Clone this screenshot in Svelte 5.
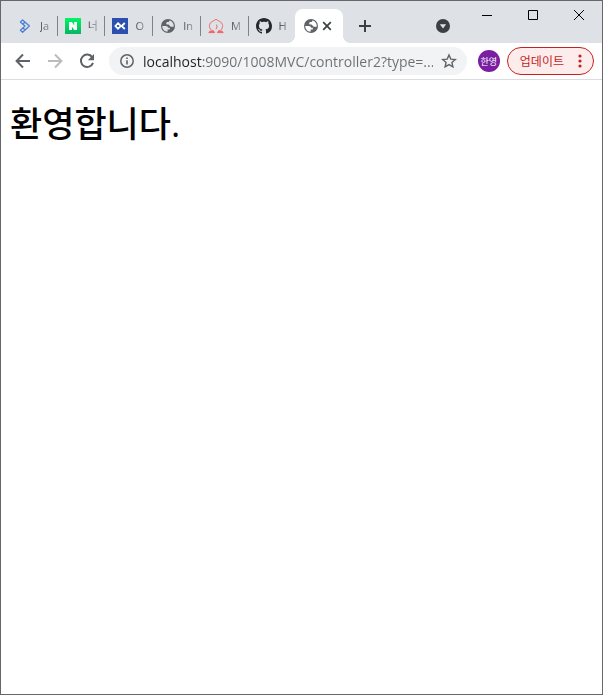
<script>
  const tabs = [
    { icon: 'chevrons', label: 'Ja' },
    { icon: 'naver', label: '너' },
    { icon: 'okky', label: 'O' },
    { icon: 'globe', label: 'In' },
    { icon: 'peach', label: 'M' },
    { icon: 'github', label: 'H' }
  ];
  let url = $state('localhost:9090/1008MVC/controller2?type=...');
</script>

{#snippet globe(land)}
  <svg class="fav" viewBox="0 0 16 16" aria-hidden="true">
    <circle cx="8" cy="8" r="7" fill="#5f6368" />
    <path d="M2.2 8 H5.8 C7.2 8 8 8.8 8 9.8 H9.8 V11.4 H7.6 V13.8 C4.4 13.6 2.2 11 2.2 8Z" fill={land} />
    <path d="M9.4 2.4 C9.4 3.8 8.8 4 7.6 4 C6.6 4 6.2 4.6 6.2 5.6 C6.2 6.6 7 6.6 8.2 6.6 C9.4 6.6 9.6 8.8 11 8.8 H13.7 C14.2 5.6 12.2 3 9.4 2.4Z" fill={land} />
  </svg>
{/snippet}

{#snippet favicon(name)}
  {#if name === 'globe'}
    {@render globe('#dee1e6')}
  {:else if name === 'chevrons'}
    <svg class="fav" viewBox="0 0 16 16" fill="none" stroke="#4a7fd6" stroke-width="1.3" stroke-linejoin="round" aria-hidden="true">
      <path d="M5.6 1.9 L12.4 8 L5.6 14.2 L3.4 12.2 L8 8 L3.4 4Z" />
      <path d="M7.8 4.2 L5.8 6.2 M7.8 11.8 L5.8 9.8" />
    </svg>
  {:else if name === 'naver'}
    <svg class="fav" viewBox="0 0 16 16" aria-hidden="true">
      <defs>
        <linearGradient id="green" x2="0" y2="1">
          <stop stop-color="#00f562" />
          <stop offset="1" stop-color="#08b562" />
        </linearGradient>
      </defs>
      <rect width="16" height="16" fill="url(#green)" />
      <path d="M4 4h3l2.2 3.4V4H12v8H9.2L6.9 8.6V12H4Z" fill="#fff" />
    </svg>
  {:else if name === 'okky'}
    <svg class="fav" viewBox="0 0 16 16" aria-hidden="true">
      <rect width="16" height="16" fill="#2b50ae" />
      <path d="M6 5.2 L8.8 8 L6 10.8 L3.4 8Z M12.8 5 L9.6 8 L12.8 11" fill="none" stroke="#fff" stroke-width="1.8" />
    </svg>
  {:else if name === 'peach'}
    <svg class="fav" viewBox="0 0 16 16" fill="none" stroke="#ee6669" stroke-width="1" aria-hidden="true">
      <path d="M3.4 12.2 C.4 9.4 .8 5.2 4.4 3.4 Q6.6 2.4 8 1.2 Q9.4 2.4 11.6 3.4 C15.2 5.2 15.6 9.4 12.6 12.2 M8.6 6.6 Q9.8 9 8 11.2" />
      <path d="M.8 14.6 Q1.6 12.6 3.4 13 Q5.4 11.4 6.6 14.6Z M9.4 14.6 Q10.6 11.4 12.6 13 Q14.4 12.6 15.2 14.6Z" fill="#ee6669" />
    </svg>
  {:else}
    <svg class="fav" viewBox="0 0 16 16" aria-hidden="true">
      <path fill="#24292e" d="M8 0C3.58 0 0 3.58 0 8c0 3.54 2.29 6.53 5.47 7.59.4.07.55-.17.55-.38 0-.19-.01-.82-.01-1.49-2.01.37-2.53-.49-2.69-.94-.09-.23-.48-.94-.82-1.13-.28-.15-.68-.52-.01-.53.63-.01 1.08.58 1.23.82.72 1.21 1.87.87 2.33.66.07-.52.28-.87.51-1.07-1.78-.2-3.64-.89-3.64-3.95 0-.87.31-1.59.82-2.15-.08-.2-.36-1.02.08-2.12 0 0 .67-.21 2.2.82.64-.18 1.32-.27 2-.27s1.36.09 2 .27c1.53-1.04 2.2-.82 2.2-.82.44 1.1.16 1.92.08 2.12.51.56.82 1.27.82 2.15 0 3.07-1.87 3.75-3.65 3.95.29.25.54.73.54 1.48 0 1.07-.01 1.93-.01 2.2 0 .21.15.46.55.38A8.01 8.01 0 0 0 16 8c0-4.42-3.58-8-8-8Z" />
    </svg>
  {/if}
{/snippet}

<div class="window">
  <header class="strip">
    <div class="tabs" role="tablist">
      {#each tabs as tab}
        <button class="tab" role="tab" aria-selected="false">
          {@render favicon(tab.icon)}
          <span class="label">{tab.label}</span>
        </button>
      {/each}
      <div class="tab active">
        {@render globe('#fff')}
        <button class="close" aria-label="Close tab">
          <svg width="10" height="10" viewBox="0 0 10 10"><path d="M1.2 1.2l7.6 7.6M8.8 1.2L1.2 8.8" stroke="#3c4043" stroke-width="1.7" /></svg>
        </button>
      </div>
    </div>
    <button class="new" aria-label="New tab">
      <svg width="12" height="12" viewBox="0 0 12 12"><path d="M6 0v12M0 6h12" stroke="#3c4043" stroke-width="2" /></svg>
    </button>
    <button class="search" aria-label="Search tabs">
      <svg width="14" height="14" viewBox="0 0 14 14"><circle cx="7" cy="7" r="7" fill="#3c4043" /><path d="M3.8 5.2h6.4L7 9.4Z" fill="#dee1e6" /></svg>
    </button>
    <div class="controls">
      <button aria-label="Minimize">
        <svg width="10" height="10" viewBox="0 0 10 10"><path d="M0 5.5h10" stroke="#000" /></svg>
      </button>
      <button aria-label="Maximize">
        <svg width="10" height="10" viewBox="0 0 10 10"><path d="M.5.5h9v9h-9Z" fill="none" stroke="#000" /></svg>
      </button>
      <button aria-label="Close">
        <svg width="10" height="10" viewBox="0 0 10 10"><path d="M0 0l10 10M10 0L0 10" stroke="#000" /></svg>
      </button>
    </div>
  </header>

  <nav class="toolbar">
    <button class="nav" aria-label="Back">
      <svg width="16" height="16" viewBox="0 0 16 16" fill="none" stroke="#5f6368" stroke-width="2"><path d="M15 8H2M8 1.5L1.6 8 8 14.5" /></svg>
    </button>
    <button class="nav" aria-label="Forward" disabled>
      <svg width="16" height="16" viewBox="0 0 16 16" fill="none" stroke="#babcbe" stroke-width="2"><path d="M1 8h13M8 1.5L14.4 8 8 14.5" /></svg>
    </button>
    <button class="nav" aria-label="Reload">
      <svg width="16" height="16" viewBox="0 0 16 16"><path d="M13.2 4.2A6.2 6.2 0 1 0 14 9.8" fill="none" stroke="#5f6368" stroke-width="2" /><path d="M15 1v6.2H8.8Z" fill="#5f6368" /></svg>
    </button>
    <div class="omnibox">
      <button class="mini" aria-label="Site information">
        <svg width="16" height="16" viewBox="0 0 16 16"><circle cx="8" cy="8" r="6.2" fill="none" stroke="#5f6368" stroke-width="1.5" /><path d="M8 7.2v4.2M8 4.4v1.6" stroke="#5f6368" stroke-width="1.6" /></svg>
      </button>
      <input class="url" type="text" aria-label="Address" bind:value={url} />
      <button class="mini" aria-label="Bookmark this page">
        <svg width="16" height="16" viewBox="0 0 16 16"><path d="M8 2l1.8 4.1 4.5.4-3.4 3 1 4.4L8 11.6l-3.9 2.3 1-4.4-3.4-3 4.5-.4Z" fill="none" stroke="#5f6368" stroke-width="1.4" /></svg>
      </button>
    </div>
    <button class="avatar">한영</button>
    <button class="update">
      <span>업데이트</span>
      <svg width="4" height="14" viewBox="0 0 4 14" fill="#c5221f" aria-hidden="true"><circle cx="2" cy="2" r="1.6" /><circle cx="2" cy="7" r="1.6" /><circle cx="2" cy="12" r="1.6" /></svg>
    </button>
  </nav>

  <main>
    <h1>환영합니다.</h1>
  </main>
</div>

<style>
  :global(body) {
    margin: 0;
  }
  .window {
    box-sizing: border-box;
    min-height: 100vh;
    border: 1px solid #666769;
    background: #fff;
    font-family: 'Open Sans', 'Noto Sans CJK KR', sans-serif;
  }
  button {
    display: flex;
    align-items: center;
    justify-content: center;
    padding: 0;
    border: 0;
    background: none;
    font: inherit;
  }
  svg {
    display: block;
    flex: none;
  }
  .strip {
    display: flex;
    align-items: flex-end;
    height: 42px;
    padding-left: 8px;
    background: #dee1e6;
  }
  .tabs {
    display: flex;
    flex: 0 1 334px;
    min-width: 0;
  }
  .tab {
    position: relative;
    display: flex;
    flex: 1 1 0;
    align-items: center;
    justify-content: flex-start;
    gap: 7px;
    min-width: 0;
    height: 34px;
    padding: 0 4px 0 8px;
    box-sizing: border-box;
  }
  .tab:not(:first-child):not(.active)::before {
    content: '';
    position: absolute;
    left: 0;
    top: 7px;
    width: 1px;
    height: 20px;
    background: #808387;
  }
  .fav {
    width: 16px;
    height: 16px;
  }
  .label {
    flex: 1 1 0;
    overflow: hidden;
    color: #45494d;
    font-size: 11px;
    line-height: 16px;
    text-align: left;
    white-space: nowrap;
    -webkit-mask-image: linear-gradient(to right, #000, #0004);
    mask-image: linear-gradient(to right, #000, #0004);
  }
  .active {
    gap: 3px;
    border-radius: 8px 8px 0 0;
    background: #fff;
  }
  .active::before,
  .active::after {
    content: '';
    position: absolute;
    bottom: 0;
    width: 8px;
    height: 8px;
  }
  .active::before {
    right: 100%;
    background: radial-gradient(circle at 0 0, transparent 8px, #fff 8px);
  }
  .active::after {
    left: 100%;
    background: radial-gradient(circle at 100% 0, transparent 8px, #fff 8px);
  }
  .close {
    flex: none;
  }
  .new {
    width: 28px;
    height: 34px;
    margin-left: 8px;
  }
  .search {
    width: 28px;
    height: 34px;
    margin-left: auto;
    margin-right: 7px;
  }
  .controls {
    display: flex;
    align-self: flex-start;
  }
  .controls button {
    width: 46px;
    height: 28px;
  }
  .toolbar {
    display: flex;
    align-items: center;
    height: 36px;
    padding: 0 8px 0 6px;
    border-bottom: 1px solid #dadce0;
  }
  .nav {
    width: 32px;
    height: 28px;
  }
  .omnibox {
    display: flex;
    flex: 1;
    align-items: center;
    gap: 8px;
    min-width: 0;
    height: 28px;
    margin-left: 6px;
    padding: 0 10px;
    box-sizing: border-box;
    border-radius: 14px;
    background: #f1f3f4;
  }
  .url {
    flex: 1;
    min-width: 0;
    height: 24px;
    padding: 0;
    border: 0;
    outline: 0;
    background: linear-gradient(to right, #202124 59px, #6b6f74 59px);
    -webkit-background-clip: text;
    background-clip: text;
    -webkit-text-fill-color: transparent;
    color: #5f6368;
    font: 14px/20px 'Open Sans', 'Noto Sans CJK KR', sans-serif;
  }
  .avatar {
    width: 22px;
    height: 22px;
    margin: 0 7px 0 11px;
    border-radius: 50%;
    background: #7b1fa2;
    color: #fff;
    font-size: 9px;
    white-space: nowrap;
  }
  .update {
    gap: 14px;
    height: 28px;
    padding: 0 11px 0 12px;
    border: 1px solid #c5221f;
    border-radius: 14px;
    background: #fcedec;
    color: #c5221f;
    font-size: 12px;
    white-space: nowrap;
  }
  main {
    padding: 22px 9px;
  }
  h1 {
    margin: 0;
    color: #000;
    font-size: 35px;
    line-height: 44px;
    font-weight: 500;
  }
</style>
